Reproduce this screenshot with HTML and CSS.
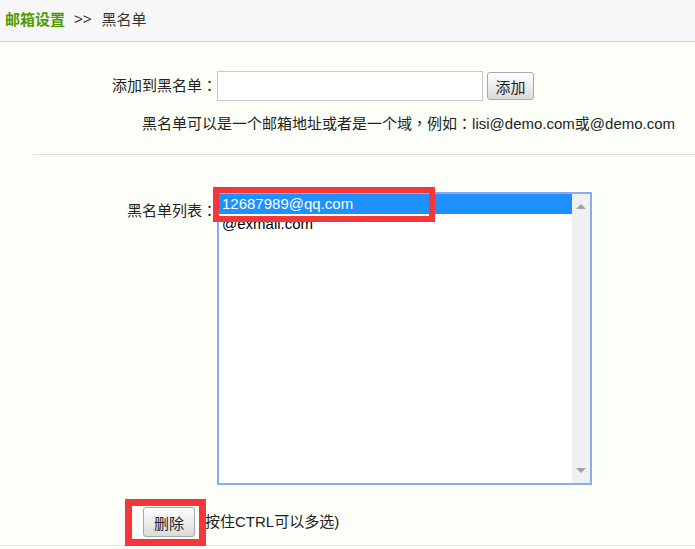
FILE: index.html
```html
<!DOCTYPE html>
<html lang="zh-CN">
<head>
<meta charset="utf-8">
<title>黑名单</title>
<link rel="stylesheet" href="styles.css">
</head>
<body>
<div class="page">
  <header class="crumb">
    <span class="crumb-root">邮箱设置</span>
    <span class="crumb-sep">&gt;&gt;</span>
    <span class="crumb-cur">黑名单</span>
  </header>
  <main class="content">
    <div class="row add-row">
      <label class="lbl">添加到黑名单<span class="punct">：</span></label>
      <input class="txt" type="text">
      <button class="btn add-btn">添加</button>
    </div>
    <p class="hint">黑名单可以是一个邮箱地址或者是一个域<span class="punct">，</span>例如<span class="punct">：</span>lisi@demo.com或@demo.com</p>
    <hr class="sep">
    <div class="row list-row">
      <label class="lbl lbl-top">黑名单列表<span class="punct">：</span></label>
      <div class="listbox">
        <ul class="options">
          <li class="opt selected">12687989@qq.com</li>
          <li class="opt">@exmail.com</li>
        </ul>
        <div class="vscroll">
          <span class="arrow up"></span>
          <span class="arrow down"></span>
        </div>
      </div>
    </div>
    <div class="row del-row">
      <button class="btn del-btn">删除</button>
      <span class="tip">(按住CTRL可以多选)</span>
    </div>
  </main>
  <div class="mark mark-item"></div>
  <div class="mark mark-del"></div>
</div>
</body>
</html>
```
FILE: styles.css
```css
html, body {
  margin: 0;
  padding: 0;
}
body {
  font-family: "Liberation Sans", "Noto Sans CJK SC", sans-serif;
  font-size: 15px;
  color: #222;
  background: #fbfff7;
}
.punct {
  font-family: "Noto Sans CJK TC", "Noto Sans CJK SC", sans-serif;
  font-feature-settings: "locl" 0;
  line-height: 1;
}
.page {
  position: relative;
  width: 695px;
  height: 549px;
  overflow: hidden;
}
.crumb {
  height: 42px;
  box-sizing: border-box;
  padding: 0 0 4px 5px;
  display: flex;
  align-items: center;
  background: #f7f7f7;
  border-bottom: 1px solid #d2d2d2;
}
.crumb-root {
  color: #4f9a00;
  font-weight: bold;
}
.crumb-sep {
  margin: 0 10px 0 9px;
  color: #333;
}
.crumb-cur {
  color: #333;
}
.content {
  padding-top: 29px;
  padding-bottom: 8px;
  border-bottom: 1px solid #dfe9d6;
}
.row {
  display: flex;
}
.add-row {
  align-items: center;
}
.lbl {
  width: 217px;
  flex: none;
  text-align: right;
  line-height: 20px;
}
.txt {
  width: 266px;
  height: 30px;
  box-sizing: border-box;
  margin: 0;
  border: 1px solid #c9c9c9;
  background: #fff;
}
.btn {
  font-family: "Liberation Sans", "Noto Sans CJK SC", sans-serif;
  font-size: 15px;
  color: #222;
  background: linear-gradient(#fefefe, #dadada);
  border: 1px solid #a9a9a9;
  border-radius: 3px;
  padding: 0;
}
.add-btn {
  width: 47px;
  height: 28px;
  margin-left: 4px;
}
.hint {
  margin: 13px 0 0 0;
  padding-left: 142px;
  line-height: 20px;
}
.sep {
  margin: 20px 0 0 33px;
  border: 0;
  border-top: 1px solid #dce3d6;
  height: 0;
}
.list-row {
  margin-top: 37px;
  align-items: flex-start;
}
.lbl-top {
  padding-top: 9px;
}
.listbox {
  width: 375px;
  height: 293px;
  box-sizing: border-box;
  border: 2px solid #86adee;
  background: #fff;
  display: flex;
}
.options {
  list-style: none;
  margin: 0;
  padding: 0;
  flex: 1;
}
.opt {
  height: 20px;
  line-height: 20px;
  padding-left: 3px;
  color: #000;
}
.opt.selected {
  background: #1e90ff;
  color: #fff;
}
.vscroll {
  width: 18px;
  flex: none;
  background: #f0f0f0;
  display: flex;
  flex-direction: column;
  justify-content: space-between;
  align-items: center;
  padding: 10px 0;
  box-sizing: border-box;
}
.arrow {
  width: 0;
  height: 0;
  border-left: 5px solid transparent;
  border-right: 5px solid transparent;
}
.arrow.up {
  border-bottom: 5px solid #a3a3a3;
}
.arrow.down {
  border-top: 5px solid #a3a3a3;
}
.del-row {
  margin-top: 22px;
  padding-left: 143px;
  align-items: center;
}
.del-btn {
  width: 52px;
  height: 30px;
}
.tip {
  margin-left: 5px;
  line-height: 20px;
}
.mark {
  position: absolute;
  box-sizing: border-box;
  border: 6px solid #f5363b;
}
.mark-item {
  left: 213px;
  top: 187px;
  width: 222px;
  height: 35px;
}
.mark-del {
  left: 125px;
  top: 499px;
  width: 81px;
  height: 47px;
  border-width: 7px;
}
```
